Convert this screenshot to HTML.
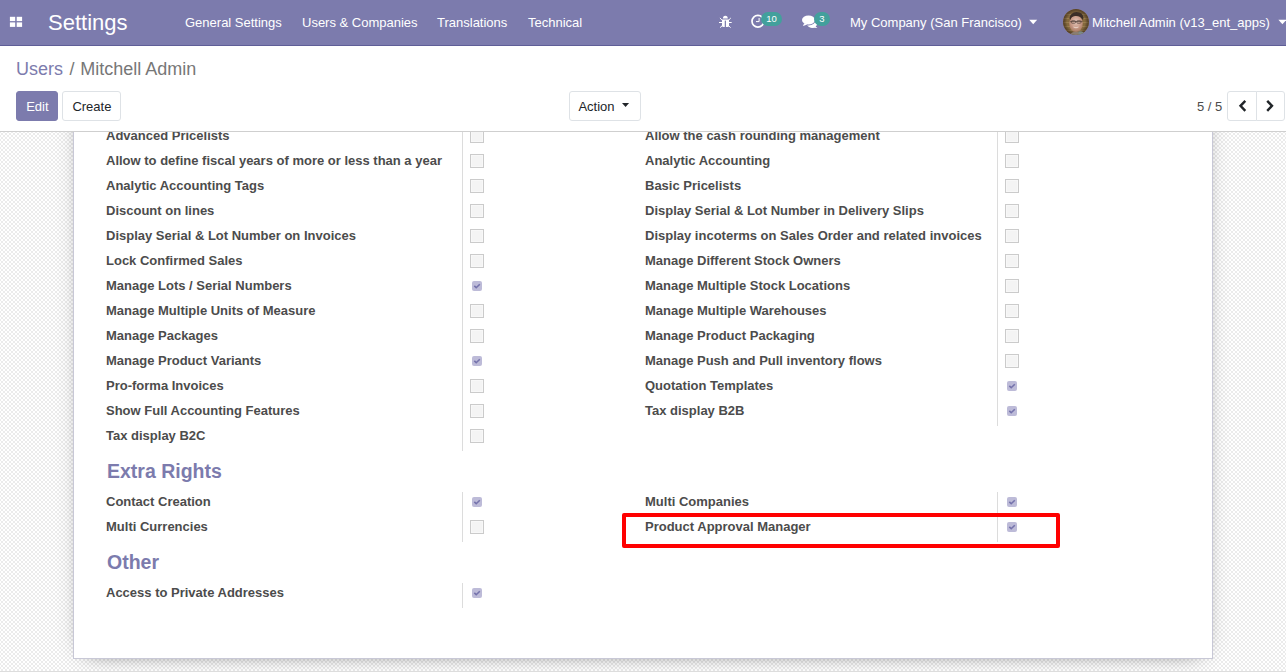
<!DOCTYPE html>
<html><head><meta charset="utf-8">
<style>
*{box-sizing:border-box;margin:0;padding:0}
html,body{width:1286px;height:672px;overflow:hidden;background:#fff;font-family:"Liberation Sans",sans-serif;position:relative}
.abs{position:absolute;white-space:nowrap}
#nav{position:absolute;left:0;top:0;width:1286px;height:46px;background:#7c7bad;border-bottom:1px solid #5f5e97;z-index:3}
.nt{position:absolute;color:#fff;font-size:13px;line-height:20px;top:13px;white-space:nowrap}
#cp{position:absolute;left:0;top:46px;width:1286px;height:86px;background:#fff;border-bottom:1px solid #cfcfcf;z-index:2}
#bg{position:absolute;left:0;top:0;width:1286px;height:672px;
 background-color:#fff;
 background-image:repeating-conic-gradient(#ebebeb 0 25%, #fff 0 50%);
 background-size:4px 4px;background-position:-1px 1px}
#sheet{position:absolute;left:73px;top:40px;width:1140px;height:619px;background:#fff;border:1px solid #c8c8d6;box-shadow:0 5px 20px -15px rgba(0,0,0,0.75), 0 0 26px -8px rgba(0,0,0,0.14)}
#bot{position:absolute;left:0;top:671px;width:1286px;height:1px;background:#ddd}
.lbl{position:absolute;font-size:13px;font-weight:bold;color:#4c4c4c;line-height:20px;white-space:nowrap}
.sep{position:absolute;width:1px;background:#dcdcdc}
.cb{position:absolute;width:14px;height:14px;border:1px solid #cbcbcb;background:#f4f4f4;box-shadow:inset 0 0 0 1px #f8f8f8}
.cbc{position:absolute;width:10px;height:10px;background:#bdbbd8;border-radius:2px}
.cbc svg{position:absolute;left:0;top:0}
.h2{position:absolute;font-size:19.5px;font-weight:bold;color:#7c7bad;line-height:24px;white-space:nowrap}
.btn{position:absolute;height:30px;border-radius:3px;font-size:13px;line-height:28px;padding-top:1px;text-align:center;white-space:nowrap}
</style></head><body>
<div id="bg"><div id="sheet"></div></div>
<div id="bot"></div>
<div class="lbl" style="left:106px;top:126px">Advanced Pricelists</div>
<div class="cb" style="left:470px;top:129px"></div>
<div class="lbl" style="left:106px;top:151px">Allow to define fiscal years of more or less than a year</div>
<div class="cb" style="left:470px;top:154px"></div>
<div class="lbl" style="left:106px;top:176px">Analytic Accounting Tags</div>
<div class="cb" style="left:470px;top:179px"></div>
<div class="lbl" style="left:106px;top:201px">Discount on lines</div>
<div class="cb" style="left:470px;top:204px"></div>
<div class="lbl" style="left:106px;top:226px">Display Serial &amp; Lot Number on Invoices</div>
<div class="cb" style="left:470px;top:229px"></div>
<div class="lbl" style="left:106px;top:251px">Lock Confirmed Sales</div>
<div class="cb" style="left:470px;top:254px"></div>
<div class="lbl" style="left:106px;top:276px">Manage Lots / Serial Numbers</div>
<div class="cbc" style="left:472px;top:281px"><svg width="10" height="10" viewBox="0 0 10 10"><path d="M2.3 4.9 L4.2 6.7 L7.8 3.2" fill="none" stroke="#7573ac" stroke-width="1.6"/></svg></div>
<div class="lbl" style="left:106px;top:301px">Manage Multiple Units of Measure</div>
<div class="cb" style="left:470px;top:304px"></div>
<div class="lbl" style="left:106px;top:326px">Manage Packages</div>
<div class="cb" style="left:470px;top:329px"></div>
<div class="lbl" style="left:106px;top:351px">Manage Product Variants</div>
<div class="cbc" style="left:472px;top:356px"><svg width="10" height="10" viewBox="0 0 10 10"><path d="M2.3 4.9 L4.2 6.7 L7.8 3.2" fill="none" stroke="#7573ac" stroke-width="1.6"/></svg></div>
<div class="lbl" style="left:106px;top:376px">Pro-forma Invoices</div>
<div class="cb" style="left:470px;top:379px"></div>
<div class="lbl" style="left:106px;top:401px">Show Full Accounting Features</div>
<div class="cb" style="left:470px;top:404px"></div>
<div class="lbl" style="left:106px;top:426px">Tax display B2C</div>
<div class="cb" style="left:470px;top:429px"></div>
<div class="lbl" style="left:645px;top:126px">Allow the cash rounding management</div>
<div class="cb" style="left:1005px;top:129px"></div>
<div class="lbl" style="left:645px;top:151px">Analytic Accounting</div>
<div class="cb" style="left:1005px;top:154px"></div>
<div class="lbl" style="left:645px;top:176px">Basic Pricelists</div>
<div class="cb" style="left:1005px;top:179px"></div>
<div class="lbl" style="left:645px;top:201px">Display Serial &amp; Lot Number in Delivery Slips</div>
<div class="cb" style="left:1005px;top:204px"></div>
<div class="lbl" style="left:645px;top:226px">Display incoterms on Sales Order and related invoices</div>
<div class="cb" style="left:1005px;top:229px"></div>
<div class="lbl" style="left:645px;top:251px">Manage Different Stock Owners</div>
<div class="cb" style="left:1005px;top:254px"></div>
<div class="lbl" style="left:645px;top:276px">Manage Multiple Stock Locations</div>
<div class="cb" style="left:1005px;top:279px"></div>
<div class="lbl" style="left:645px;top:301px">Manage Multiple Warehouses</div>
<div class="cb" style="left:1005px;top:304px"></div>
<div class="lbl" style="left:645px;top:326px">Manage Product Packaging</div>
<div class="cb" style="left:1005px;top:329px"></div>
<div class="lbl" style="left:645px;top:351px">Manage Push and Pull inventory flows</div>
<div class="cb" style="left:1005px;top:354px"></div>
<div class="lbl" style="left:645px;top:376px">Quotation Templates</div>
<div class="cbc" style="left:1007px;top:381px"><svg width="10" height="10" viewBox="0 0 10 10"><path d="M2.3 4.9 L4.2 6.7 L7.8 3.2" fill="none" stroke="#7573ac" stroke-width="1.6"/></svg></div>
<div class="lbl" style="left:645px;top:401px">Tax display B2B</div>
<div class="cbc" style="left:1007px;top:406px"><svg width="10" height="10" viewBox="0 0 10 10"><path d="M2.3 4.9 L4.2 6.7 L7.8 3.2" fill="none" stroke="#7573ac" stroke-width="1.6"/></svg></div>
<div class="sep" style="left:462px;top:120px;height:331px"></div>
<div class="sep" style="left:997px;top:120px;height:306px"></div>
<div class="h2" style="left:107px;top:459px">Extra Rights</div>
<div class="lbl" style="left:106px;top:492px">Contact Creation</div>
<div class="cbc" style="left:472px;top:497px"><svg width="10" height="10" viewBox="0 0 10 10"><path d="M2.3 4.9 L4.2 6.7 L7.8 3.2" fill="none" stroke="#7573ac" stroke-width="1.6"/></svg></div>
<div class="lbl" style="left:106px;top:517px">Multi Currencies</div>
<div class="cb" style="left:470px;top:520px"></div>
<div class="lbl" style="left:645px;top:492px">Multi Companies</div>
<div class="cbc" style="left:1007px;top:497px"><svg width="10" height="10" viewBox="0 0 10 10"><path d="M2.3 4.9 L4.2 6.7 L7.8 3.2" fill="none" stroke="#7573ac" stroke-width="1.6"/></svg></div>
<div class="lbl" style="left:645px;top:517px">Product Approval Manager</div>
<div class="cbc" style="left:1007px;top:522px"><svg width="10" height="10" viewBox="0 0 10 10"><path d="M2.3 4.9 L4.2 6.7 L7.8 3.2" fill="none" stroke="#7573ac" stroke-width="1.6"/></svg></div>
<div class="sep" style="left:462px;top:492px;height:50px"></div>
<div class="sep" style="left:997px;top:492px;height:50px"></div>
<div class="h2" style="left:107px;top:550px">Other</div>
<div class="lbl" style="left:106px;top:583px">Access to Private Addresses</div>
<div class="cbc" style="left:472px;top:588px"><svg width="10" height="10" viewBox="0 0 10 10"><path d="M2.3 4.9 L4.2 6.7 L7.8 3.2" fill="none" stroke="#7573ac" stroke-width="1.6"/></svg></div>
<div class="sep" style="left:462px;top:583px;height:25px"></div>
<div style="position:absolute;left:622px;top:513px;width:438px;height:35px;border:4px solid #ff0000;border-radius:2px"></div>

<div id="nav">
<svg class="abs" style="left:9px;top:16px" width="14" height="12" viewBox="0 0 14 12"><rect x="0.9" y="0.8" width="5.3" height="4.3" fill="#fff"/><rect x="7.7" y="0.8" width="5.4" height="4.3" fill="#fff"/><rect x="0.9" y="6.4" width="5.3" height="4.5" fill="#fff"/><rect x="7.7" y="6.4" width="5.4" height="4.5" fill="#fff"/></svg>
<div class="abs" style="left:48px;top:10px;font-size:22px;line-height:26px;color:#fff">Settings</div>
<div class="nt" style="left:185px">General Settings</div>
<div class="nt" style="left:302px">Users &amp; Companies</div>
<div class="nt" style="left:437px">Translations</div>
<div class="nt" style="left:528px">Technical</div>

<svg class="abs" style="left:714px;top:10px" width="24" height="24" viewBox="0 0 24 24">
<path d="M8.9 8.6 A2.45 2.9 0 0 1 13.8 8.6 Z" fill="#fff"/>
<path d="M8 9.5 H15 V15.6 Q15 17.1 13.5 17.1 H9.5 Q8 17.1 8 15.6 Z" fill="#fff"/>
<rect x="10.75" y="10.6" width="1.2" height="6.6" fill="#7c7bad"/>
<g stroke="#fff" stroke-width="1.0" fill="none">
<path d="M5.9 8 L8.5 10.6"/><path d="M5 12.5 H8.2"/><path d="M6.1 17.6 L8.5 15.4"/>
<path d="M16.8 8 L14.2 10.6"/><path d="M17.7 12.5 H14.5"/><path d="M16.6 17.6 L14.2 15.4"/>
</g></svg>
<svg class="abs" style="left:746px;top:6px" width="20" height="28" viewBox="0 0 20 28">
<circle cx="11.9" cy="15.25" r="5.9" fill="none" stroke="#fff" stroke-width="1.7"/>
<path d="M13.1 12 V15.6 H10" fill="none" stroke="#fff" stroke-width="1"/>
</svg>
<svg class="abs" style="left:798px;top:6px" width="22" height="28" viewBox="0 0 22 28">
<ellipse cx="14" cy="16.6" rx="5.4" ry="5.3" fill="#fff"/>
<path d="M16.5 19.5 L19.4 22.1 L13.5 21.6 Z" fill="#fff"/>
<ellipse cx="10.5" cy="14" rx="7.3" ry="5.4" fill="#7c7bad"/>
<ellipse cx="10.5" cy="14" rx="6.5" ry="4.6" fill="#fff"/>
<path d="M6.2 17.2 L4.9 19.9 Q7.6 19.3 9.2 18.3 Z" fill="#fff"/>
</svg>
<div class="nt" style="left:850px">My Company (San Francisco)</div>
<svg class="abs" style="left:1020px;top:15px" width="20" height="12"><polygon points="9.2,4.8 17.2,4.8 13.2,9.3" fill="#fff"/></svg>
<svg class="abs" style="left:1063px;top:9px" width="26" height="26" viewBox="0 0 26 26">
<defs><clipPath id="av"><circle cx="13" cy="13" r="13"/></clipPath><radialGradient id="fc" cx="0.5" cy="0.4" r="0.6"><stop offset="0" stop-color="#e2c6ba"/><stop offset="0.6" stop-color="#c89a88"/><stop offset="1" stop-color="#a77a62"/></radialGradient><radialGradient id="vg" cx="0.5" cy="0.5" r="0.5"><stop offset="0.7" stop-color="#000" stop-opacity="0"/><stop offset="1" stop-color="#2a1a10" stop-opacity="0.55"/></radialGradient></defs>
<g clip-path="url(#av)">
<rect width="26" height="26" fill="#86693f"/>
<g stroke="#a88d5a" stroke-width="1.2" opacity="0.6"><path d="M0 5.5H26M0 9.5H26M0 13.5H26M0 17.5H26M0 21.5H26"/></g>
<circle cx="13" cy="13" r="13" fill="url(#vg)"/>
<ellipse cx="13" cy="14.5" rx="6.8" ry="8.6" fill="url(#fc)"/>
<path d="M6.5 9.5 Q7 3.5 13.5 3 Q20 3 20.5 9 Q19.5 12 19 10 Q17 6.5 12 7 Q8 7.5 7.5 11 Z" fill="#3b2e28"/>
<path d="M7.2 12.4 H19.5" stroke="#4d3d38" stroke-width="0.7"/>
<rect x="8.3" y="11.8" width="4.2" height="2.4" rx="0.8" fill="none" stroke="#4d3d38" stroke-width="0.7"/>
<rect x="13.8" y="11.8" width="4.2" height="2.4" rx="0.8" fill="none" stroke="#4d3d38" stroke-width="0.7"/>
<path d="M10.5 18 Q13 19.6 15.5 18" stroke="#ecd8cf" stroke-width="0.9" fill="none"/>
<path d="M7 26 Q9 22.5 13 22.8 Q17 22.5 21 26 Z" fill="#8a7d70"/>
<path d="M15.5 22.5 Q20 21.5 23 26 H15.5 Z" fill="#7b8985"/>
</g></svg>
<div class="nt" style="left:1092px">Mitchell Admin (v13_ent_apps)</div>
<svg class="abs" style="left:1270px;top:15px" width="16" height="12"><polygon points="8.4,4.8 16.4,4.8 12.4,9.3" fill="#fff"/></svg>
<div class="abs" style="left:761px;top:12px;width:21px;height:14px;border-radius:7px;background:#42a09c;color:#fff;font-size:9.5px;line-height:14px;text-align:center">10</div>
<div class="abs" style="left:814px;top:12px;width:16px;height:14px;border-radius:7px;background:#42a09c;color:#fff;font-size:9.5px;line-height:14px;text-align:center">3</div>
</div>
<div id="cp">
<div class="abs" style="left:16px;top:12px;font-size:18px;line-height:22px;color:#777"><span style="color:#7c7bad">Users</span><span style="padding:0 5.8px 0 6.5px">/</span>Mitchell Admin</div>
<div class="btn" style="left:16px;top:45px;width:42px;background:#7c7bad;color:#fff;border:1px solid #7c7bad;text-indent:0.8px">Edit</div>
<div class="btn" style="left:62px;top:45px;width:59px;background:#fff;color:#212529;border:1px solid #dee2e6;text-indent:0.8px">Create</div>
<div class="btn" style="left:569px;top:45px;width:72px;background:#fff;color:#212529;border:1px solid #dee2e6;text-align:left;padding-left:8.4px">Action</div>
<svg class="abs" style="left:0;top:54px" width="1286" height="14"><polygon points="622,2.9 629.1,2.9 625.55,6.9" fill="#212529"/></svg>
<div class="abs" style="left:1197px;top:51px;font-size:13px;line-height:20px;color:#4c4c4c">5 / 5</div>
<div class="btn" style="left:1227px;top:45px;width:30px;background:#fff;border:1px solid #dee2e6;border-radius:3px 0 0 3px"></div>
<div class="btn" style="left:1256px;top:45px;width:29px;background:#fff;border:1px solid #dee2e6;border-radius:0 3px 3px 0"></div>
<svg class="abs" style="left:1227px;top:45px" width="58" height="30" viewBox="0 0 58 30"><path d="M18.3 9.8 L13.5 14.85 L18.3 19.9" fill="none" stroke="#212529" stroke-width="2.4"/><path d="M40.2 9.8 L45 14.85 L40.2 19.9" fill="none" stroke="#212529" stroke-width="2.4"/></svg>
</div>
</body></html>
